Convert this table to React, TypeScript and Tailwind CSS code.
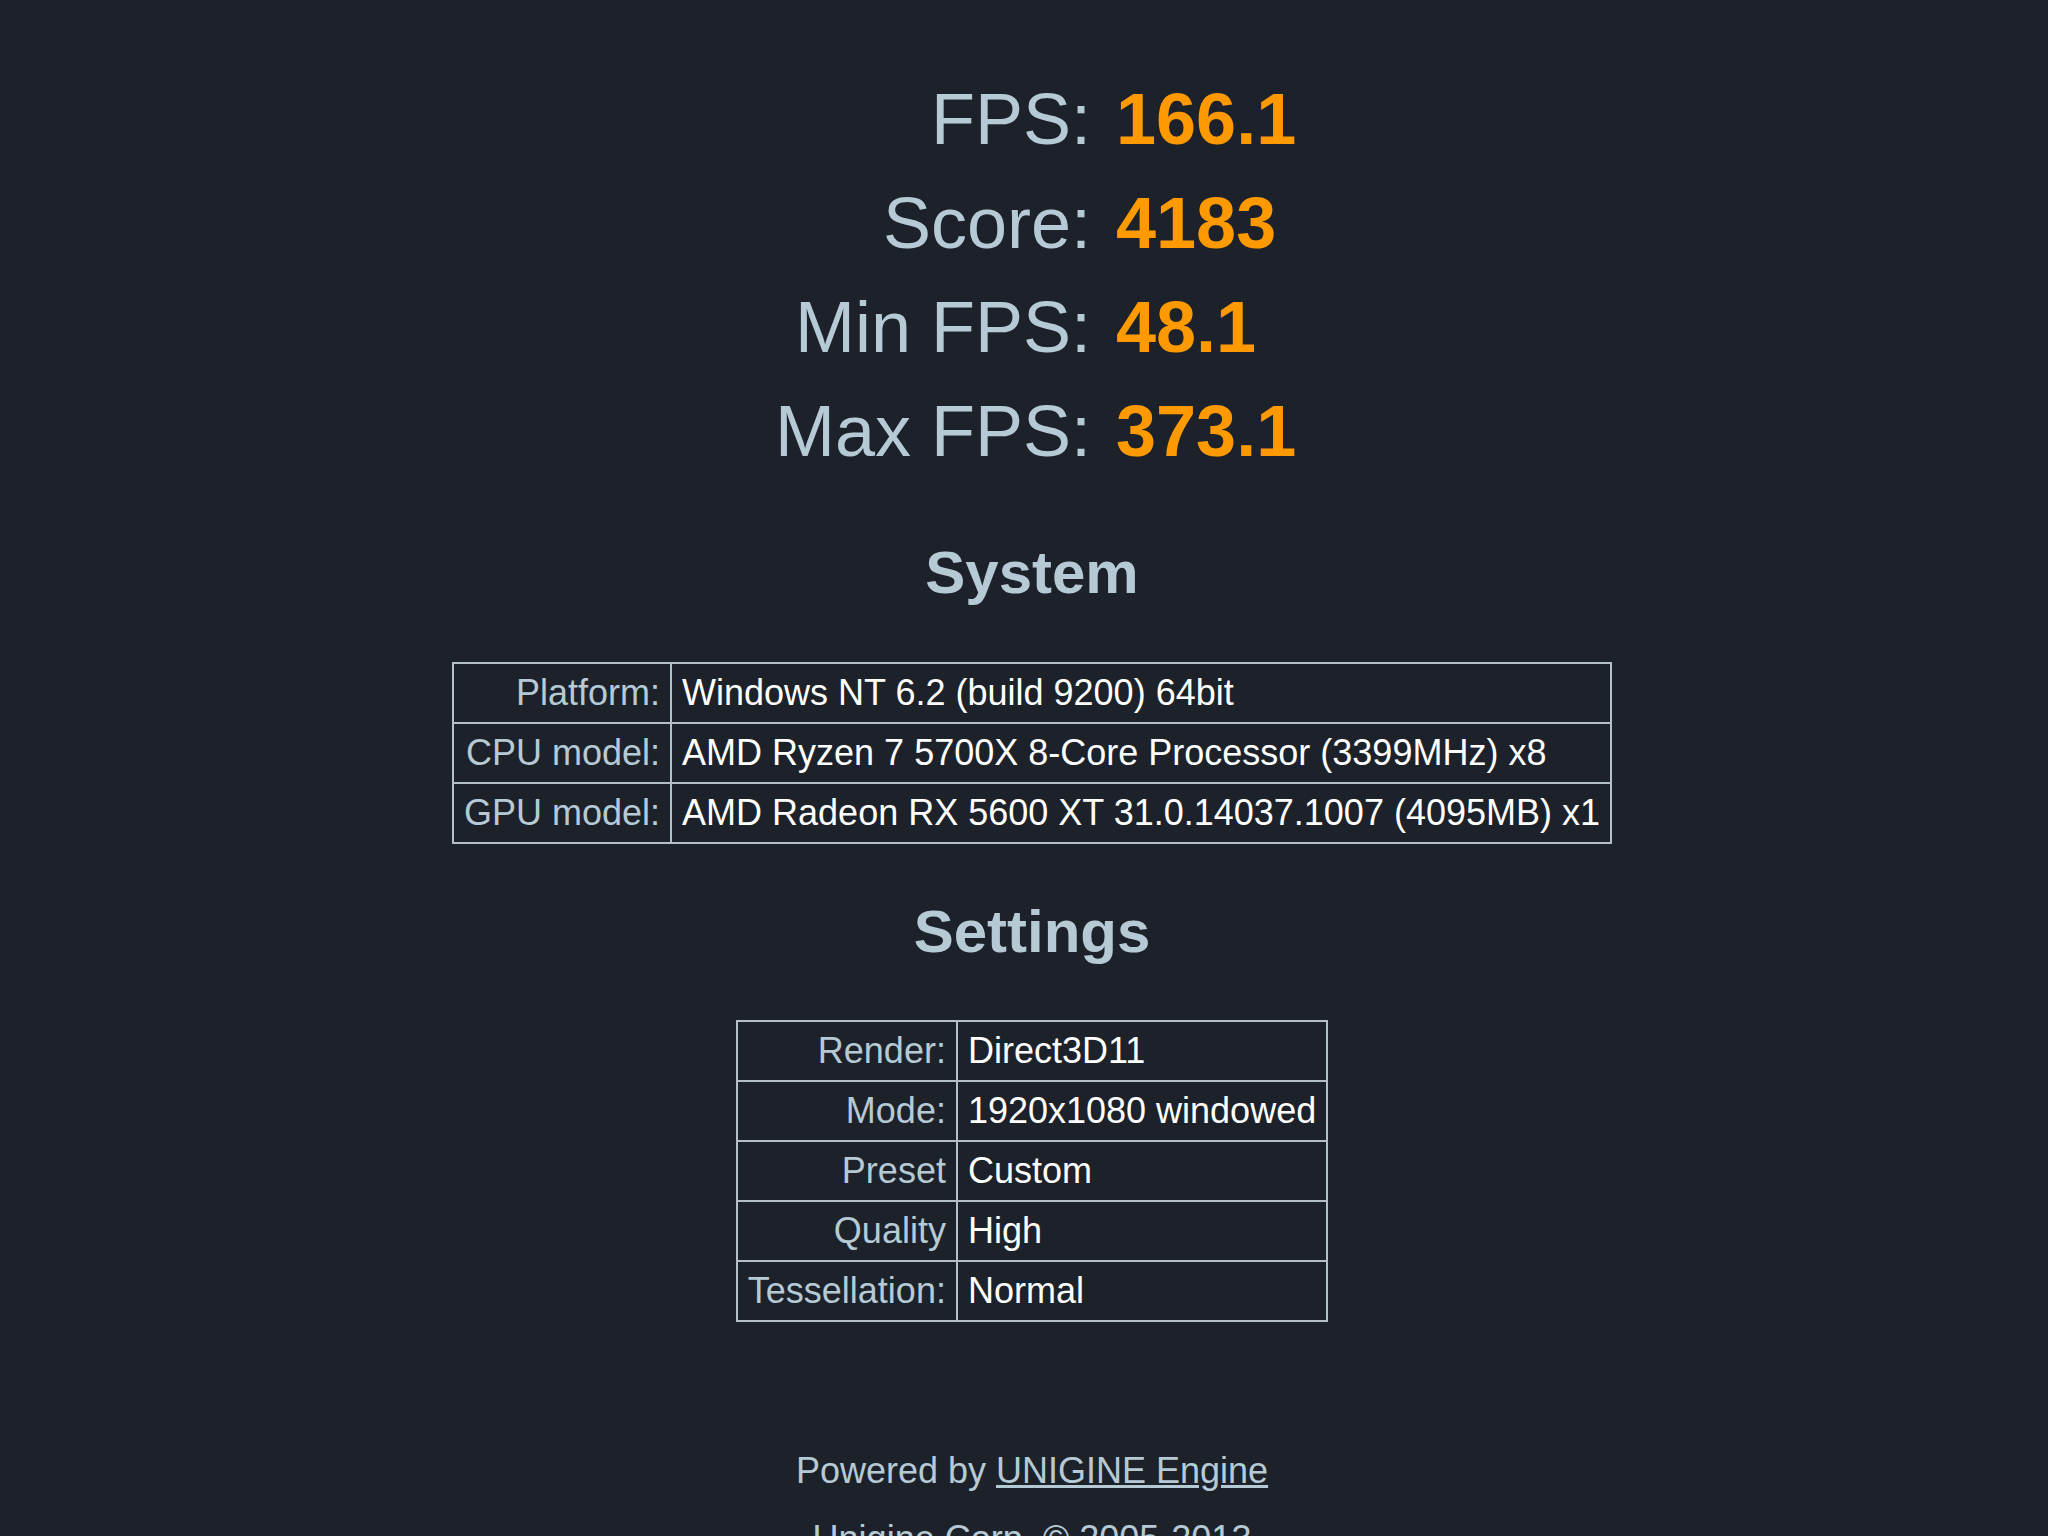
import React from "react";

const stats = [
  { label: "FPS:", value: "166.1" },
  { label: "Score:", value: "4183" },
  { label: "Min FPS:", value: "48.1" },
  { label: "Max FPS:", value: "373.1" },
];

const system = [
  { label: "Platform:", value: "Windows NT 6.2 (build 9200) 64bit" },
  { label: "CPU model:", value: "AMD Ryzen 7 5700X 8-Core Processor (3399MHz) x8" },
  { label: "GPU model:", value: "AMD Radeon RX 5600 XT 31.0.14037.1007 (4095MB) x1" },
];

const settings = [
  { label: "Render:", value: "Direct3D11" },
  { label: "Mode:", value: "1920x1080 windowed" },
  { label: "Preset", value: "Custom" },
  { label: "Quality", value: "High" },
  { label: "Tessellation:", value: "Normal" },
];

function InfoTable({ rows }: { rows: { label: string; value: string }[] }) {
  return (
    <div className="inline-grid grid-cols-[auto_auto] gap-[2px] bg-[#b3bec5] p-[2px]">
      {rows.map((r) => (
        <React.Fragment key={r.label}>
          <div className="h-[58px] bg-[#1d222a] px-[10px] text-right text-[36px] leading-[58px] text-[#b6cad6] whitespace-nowrap">
            {r.label}
          </div>
          <div className="h-[58px] bg-[#1d222a] px-[10px] text-left text-[36px] leading-[58px] text-white whitespace-nowrap">
            {r.value}
          </div>
        </React.Fragment>
      ))}
    </div>
  );
}

export default function App() {
  return (
    <div className="h-[1536px] w-full overflow-hidden bg-[#1d222a] font-['Liberation_Sans',Arial,sans-serif]">
      <div className="flex flex-col items-center pl-[16px] pt-[67px]">
        <div className="grid grid-cols-[343px_200px] gap-x-[25px]">
          {stats.map((s) => (
            <React.Fragment key={s.label}>
              <div className="h-[104px] text-right text-[72px] leading-[104px] text-[#b6cad6] whitespace-nowrap">
                {s.label}
              </div>
              <div className="h-[104px] text-left text-[72px] font-bold leading-[104px] text-[#ff9900] whitespace-nowrap">
                {s.value}
              </div>
            </React.Fragment>
          ))}
        </div>

        <h2 className="mt-[55px] text-[60px] font-bold leading-[69px] text-[#b6cad6]">System</h2>
        <div className="mt-[55px]">
          <InfoTable rows={system} />
        </div>

        <h2 className="mt-[53px] text-[60px] font-bold leading-[69px] text-[#b6cad6]">Settings</h2>
        <div className="mt-[54px]">
          <InfoTable rows={settings} />
        </div>

        <div className="mt-[115px] flex flex-col items-center text-[36px] leading-[68px] text-[#b6cad6]">
          <p>
            Powered by <a className="underline" href="#">UNIGINE Engine</a>
          </p>
          <p>Unigine Corp. © 2005-2013</p>
        </div>
      </div>
    </div>
  );
}
